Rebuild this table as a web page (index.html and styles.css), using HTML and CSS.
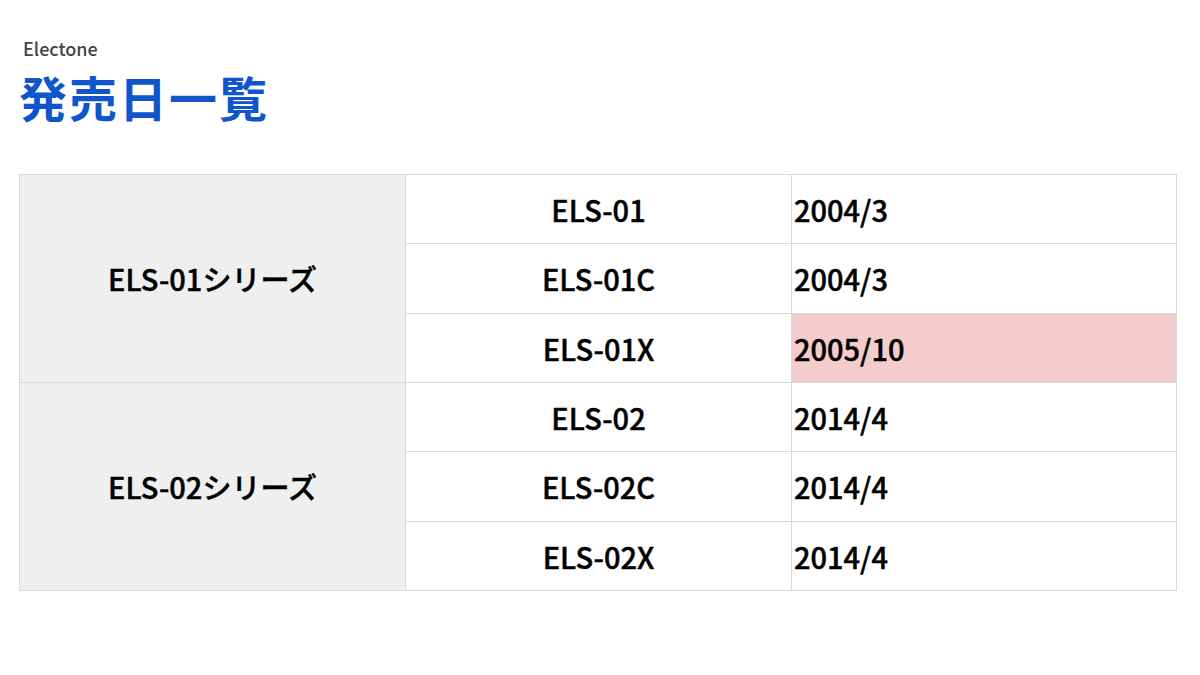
FILE: index.html
```html
<!DOCTYPE html>
<html lang="ja">
<head>
<meta charset="utf-8">
<link rel="stylesheet" href="styles.css">
</head>
<body>
<div class="page">
  <div class="kicker">Electone</div>
  <h1 class="title">発売日一覧</h1>
  <table class="grid">
    <tr>
      <td class="series" rowspan="3">ELS-01シリーズ</td>
      <td class="model">ELS-01</td>
      <td class="date">2004/3</td>
    </tr>
    <tr>
      <td class="model">ELS-01C</td>
      <td class="date">2004/3</td>
    </tr>
    <tr>
      <td class="model">ELS-01X</td>
      <td class="date hl">2005/10</td>
    </tr>
    <tr>
      <td class="series" rowspan="3">ELS-02シリーズ</td>
      <td class="model">ELS-02</td>
      <td class="date">2014/4</td>
    </tr>
    <tr>
      <td class="model">ELS-02C</td>
      <td class="date">2014/4</td>
    </tr>
    <tr>
      <td class="model">ELS-02X</td>
      <td class="date">2014/4</td>
    </tr>
  </table>
</div>
</body>
</html>
```
FILE: styles.css
```css
html, body {
  margin: 0;
  padding: 0;
  background: #ffffff;
}
body {
  font-family: "Noto Sans CJK JP", "Noto Sans", sans-serif;
  color: #000;
}
.page {
  padding: 35px 23px 0 19px;
}
.kicker {
  margin-left: 4px;
  font-size: 18px;
  font-weight: 500;
  color: #444;
  line-height: 26px;
}
.title {
  margin: 0;
  font-size: 48px;
  font-weight: 700;
  color: #1155cc;
  letter-spacing: 2px;
  line-height: 70px;
}
.grid {
  margin-top: 43px;
  width: 1158px;
  border-collapse: collapse;
  table-layout: fixed;
}
.grid td {
  border: 1px solid #d9d9d9;
  height: 68.33px;
  padding: 0;
  font-size: 29px;
  font-weight: 500;
  -webkit-text-stroke: 0.45px #000;
  line-height: 36px;
  vertical-align: middle;
}
.series {
  width: 385px;
  background: #efefef;
  text-align: center;
}
.model {
  width: 385px;
  text-align: center;
}
.date {
  padding-left: 2px !important;
  text-align: left;
}
.hl {
  background: #f4cccc;
}
```
